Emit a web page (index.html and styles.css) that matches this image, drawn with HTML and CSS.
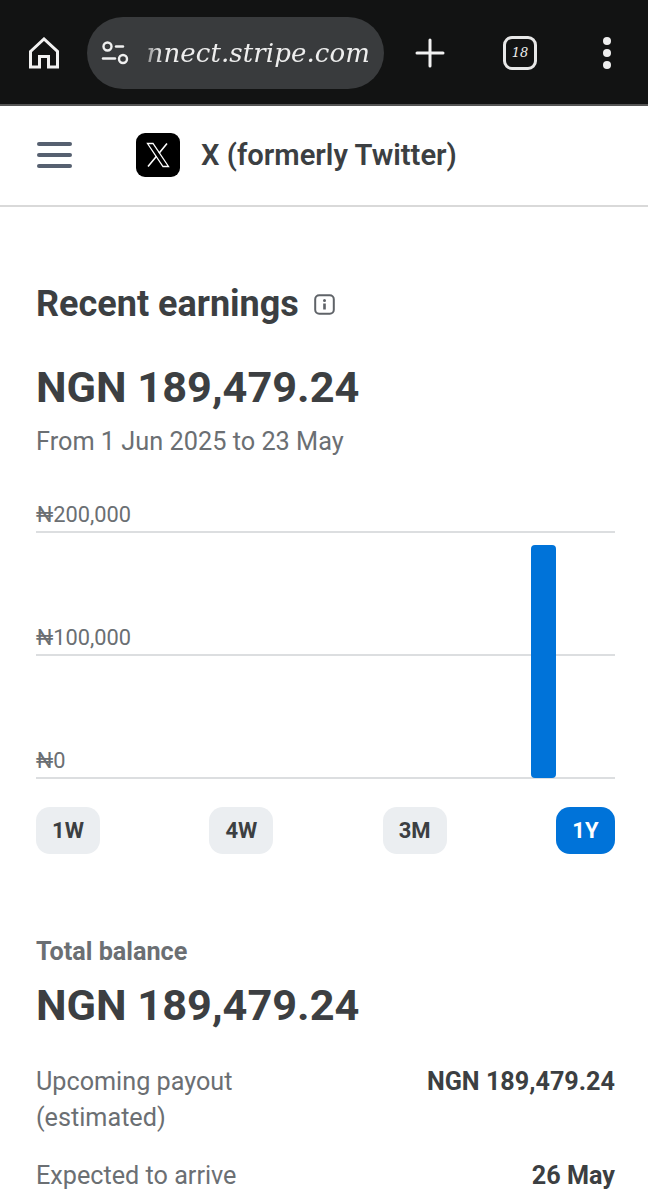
FILE: index.html
```html
<!DOCTYPE html>
<html lang="en">
<head>
  <meta charset="UTF-8">
  <meta name="viewport" content="width=device-width, initial-scale=1.0">
  <title>Recent earnings</title>
  <link rel="stylesheet" href="styles.css">
</head>
<body>

  <!-- Browser toolbar -->
  <div class="toolbar">
    <svg class="tool-home" width="30" height="32" viewBox="0 0 30 32" fill="none" stroke="#f2f2f2" stroke-width="3" stroke-linejoin="miter">
      <path d="M1.500 14.500 15 2l13.500 12.500V30H19.500V19.500h-9V30H1.500z"/>
    </svg>
    <div class="address">
      <svg width="30" height="24" viewBox="0 0 30 24" fill="none" stroke="#f0f0f0" stroke-width="2.400" stroke-linecap="round">
        <circle cx="6.500" cy="5.500" r="4"/>
        <path d="M15 5.500h7"/>
        <path d="M2 17.500h12"/>
        <circle cx="22" cy="18" r="4"/>
      </svg>
      <div class="url-clip"><span class="url">nnect.stripe.com</span></div>
    </div>
    <svg class="tool-plus" width="30" height="30" viewBox="0 0 30 30" stroke="#f2f2f2" stroke-width="3" stroke-linecap="round">
      <path d="M15 2v26M2 15h26"/>
    </svg>
    <div class="tabs"><span>18</span></div>
    <div class="dots"><i></i><i></i><i></i></div>
  </div>

  <!-- App header -->
  <div class="app-header">
    <div class="burger"><i></i><i></i><i></i></div>
    <div class="logo">
      <svg width="28" height="28" viewBox="0 0 28 28" fill="none" stroke="#fff">
        <path d="M3.500 2.500h5.500l15.500 23H19z" stroke-width="1.300"/>
        <path d="M23 2.500 15 12.300M12.500 15.300 4 25.500" stroke-width="1.600"/>
      </svg>
    </div>
    <div class="app-name">X (formerly Twitter)</div>
  </div>

  <div class="content">

    <!-- Earnings chart -->
    <div class="earnings-title">
      <h1>Recent earnings</h1>
      <svg width="21" height="21" viewBox="0 0 21 21" fill="none">
        <rect x="1.200" y="1.200" width="18.600" height="18.600" rx="4" stroke="#5f6368" stroke-width="2"/>
        <circle cx="10.500" cy="6.500" r="1.500" fill="#5f6368"/>
        <rect x="9.200" y="9.500" width="2.600" height="6" fill="#5f6368"/>
      </svg>
    </div>
    <div class="amount">NGN 189,479.24</div>
    <div class="range">From 1 Jun 2025 to 23 May</div>

    <div class="chart">
      <div class="chart-row top"><span>₦200,000</span></div>
      <div class="chart-row"><span>₦100,000</span></div>
      <div class="chart-row"><span>₦0</span></div>
      <div class="bar"></div>
    </div>

    <div class="periods">
      <button>1W</button>
      <button>4W</button>
      <button>3M</button>
      <button class="active">1Y</button>
    </div>

    <!-- Balance -->
    <div class="balance-label">Total balance</div>
    <div class="amount">NGN 189,479.24</div>

    <div class="detail first">
      <div class="detail-name">Upcoming payout<br>(estimated)</div>
      <div class="detail-value">NGN 189,479.24</div>
    </div>
    <div class="detail">
      <div class="detail-name">Expected to arrive</div>
      <div class="detail-value">26 May</div>
    </div>

  </div>

</body>
</html>
```

FILE: styles.css
```css
/* Basic Styling */
* {
  box-sizing: border-box;
  font-family: Roboto, "Liberation Sans", sans-serif;
}
html, body {
  height: 1200px;
  overflow: hidden;
}
body {
  margin: 0;
  background-color: #fff;
  color: #3c4043;
}

/* Browser toolbar */
.toolbar {
  height: 106px;
  display: flex;
  align-items: center;
  background-color: #121313;
  border-bottom: 2px solid #555;
  padding: 1px 0 0 29px;
}
.tool-home {
  flex: none;
}
.address {
  width: 297px;
  height: 72px;
  margin-left: 28px;
  padding-left: 14px;
  display: flex;
  align-items: center;
  background-color: #393b3d;
  border-radius: 36px;
}
.url-clip {
  flex: none;
  width: 238px;
  margin-left: 1px;
  display: flex;
  justify-content: flex-end;
  overflow: hidden;
  white-space: nowrap;
  -webkit-mask-image: linear-gradient(to right, transparent 0, #000 30px);
  mask-image: linear-gradient(to right, transparent 0, #000 30px);
}
.url {
  font-family: "DejaVu Serif", serif;
  font-style: italic;
  font-size: 26px;
  letter-spacing: 0.1px;
  color: #eee;
}
.tool-plus {
  margin-left: 31px;
}
.tabs {
  width: 34px;
  height: 34px;
  margin-left: 58px;
  display: flex;
  align-items: center;
  justify-content: center;
  border: 3px solid #e8e8e8;
  border-radius: 9px;
}
.tabs span {
  font-family: "DejaVu Serif", serif;
  font-style: italic;
  font-size: 13px;
  color: #eee;
}
.dots {
  margin-left: 66px;
  display: flex;
  flex-direction: column;
  gap: 4px;
}
.dots i {
  width: 8px;
  height: 8px;
  border-radius: 50%;
  background-color: #eee;
}

/* App header */
.app-header {
  height: 101px;
  display: flex;
  align-items: center;
  padding: 0 0 2px 37px;
  border-bottom: 2px solid #d9d9d9;
}
.burger {
  width: 35px;
  display: flex;
  flex-direction: column;
  gap: 7px;
}
.burger i {
  height: 4px;
  border-radius: 2px;
  background-color: #566070;
}
.logo {
  width: 44px;
  height: 44px;
  margin-left: 64px;
  display: flex;
  align-items: center;
  justify-content: center;
  background-color: #000;
  border-radius: 9px;
}
.app-name {
  margin-left: 21px;
  font-size: 29.200px;
  font-weight: 600;
  color: #3c3f42;
}

/* Content */
.content {
  padding: 0 33px 0 36px;
}
.earnings-title {
  display: flex;
  align-items: center;
  gap: 15px;
  margin-top: 76px;
  height: 42px;
}
h1 {
  margin: 0;
  font-size: 36px;
  font-weight: 700;
  color: #3c3f42;
}
.amount {
  font-size: 43.300px;
  font-weight: 700;
  line-height: 50px;
  color: #3c3f42;
}
.earnings-title + .amount {
  margin-top: 38px;
}
.range {
  margin-top: 14px;
  font-size: 25.300px;
  line-height: 30px;
  color: #6b6f73;
}

/* Chart */
.chart {
  position: relative;
  margin-top: 32px;
}
.chart-row {
  height: 123px;
  display: flex;
  align-items: flex-end;
  border-bottom: 2px solid #dcdee0;
  font-size: 21.800px;
  color: #6b6f73;
}
.chart-row.top {
  height: 44px;
}
.chart-row span {
  line-height: 32px;
}
.bar {
  position: absolute;
  left: 495px;
  bottom: 1px;
  width: 25px;
  height: 233px;
  background-color: #0073d9;
  border-radius: 4px;
}

/* Period buttons */
.periods {
  display: flex;
  justify-content: space-between;
  margin-top: 28px;
}
.periods button {
  width: 64px;
  height: 47px;
  border: 0;
  border-radius: 14px;
  background-color: #ebeef1;
  color: #3c3f42;
  font-size: 22px;
  font-weight: 700;
}
.periods button.active {
  width: 59px;
  background-color: #0073d9;
  color: #fff;
}

/* Balance */
.balance-label {
  margin-top: 83px;
  font-size: 25.200px;
  font-weight: 700;
  color: #6b6f73;
}
.balance-label + .amount {
  margin-top: 15px;
}
.detail {
  display: flex;
  justify-content: space-between;
  margin-top: 22px;
  font-size: 25.200px;
  line-height: 36px;
}
.detail.first {
  margin-top: 33px;
}
.detail-name {
  color: #6b6f73;
}
.detail-value {
  font-weight: 700;
  color: #3c3f42;
}
```
